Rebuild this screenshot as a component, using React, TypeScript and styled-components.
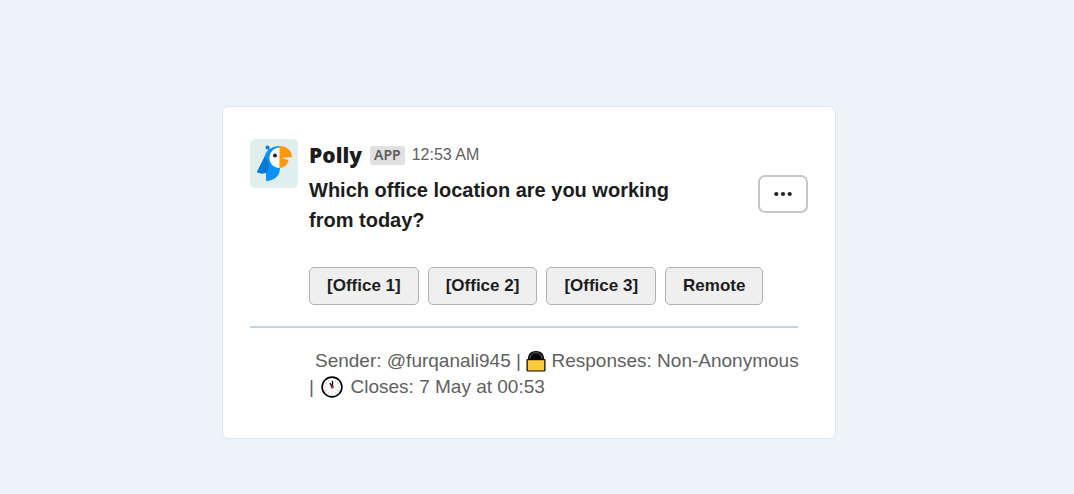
import React from 'react';
import styled, { createGlobalStyle } from 'styled-components';

const GlobalStyle = createGlobalStyle`
  * { box-sizing: border-box; }
  body {
    margin: 0;
    background: #edf3f7;
    color: #1d1c1d;
    font-family: "Liberation Sans", Arial, sans-serif;
  }
`;

const Page = styled.main`
  min-height: 100vh;
  padding: 106px 16px 55px 0;
`;

const Card = styled.article`
  width: 100%;
  max-width: 614px;
  margin: 0 auto;
  padding: 32px 27px 38px;
  background: #fff;
  border: 1px solid #dde5e8;
  border-radius: 7px;
`;

const Message = styled.div`
  display: grid;
  grid-template-columns: 48px 1fr;
  column-gap: 11px;
`;

const Avatar = styled.svg`
  display: block;
  width: 48px;
  height: 49px;
`;

const Header = styled.header`
  display: flex;
  align-items: center;
  height: 32px;
`;

const Name = styled.span`
  font-family: "Open Sans", sans-serif;
  font-size: 21px;
  font-weight: 800;
  line-height: 32px;
`;

const Badge = styled.span`
  margin: 0 7px 0 8px;
  padding: 0 4px 2px;
  border-radius: 3px;
  background: #e0e0e0;
  color: #5c5a5c;
  font-family: "Noto Sans", sans-serif;
  font-size: 14px;
  font-weight: 600;
  line-height: 17px;
`;

const Time = styled.time`
  color: #616061;
  font-size: 16px;
`;

const QuestionRow = styled.div`
  display: flex;
  justify-content: space-between;
  align-items: flex-start;
  padding-top: 4px;
`;

const Question = styled.h1`
  max-width: 400px;
  margin: 0;
  font-size: 20px;
  line-height: 30px;
`;

const MenuButton = styled.button`
  display: grid;
  place-items: center;
  width: 50px;
  height: 38px;
  padding: 0;
  border: 2px solid #c6c6c6;
  border-radius: 7px;
  background: #fff;
`;

const Options = styled.div`
  display: flex;
  flex-wrap: wrap;
  gap: 9px;
  margin-top: 32px;
`;

const Option = styled.button`
  height: 38px;
  padding: 0 17px 1px;
  border: 1px solid #b0b0b0;
  border-radius: 5px;
  background: #efefef;
  color: #1d1c1d;
  font: 700 17px "Liberation Sans", Arial, sans-serif;
`;

const Divider = styled.hr`
  height: 2px;
  margin: 21px 10px 20px 0;
  border: 0;
  background: #bfd8e3;
`;

const Footer = styled.footer`
  margin: 0 0 0 59px;
  color: #616061;
  font-size: 19px;
  line-height: 26px;
  text-indent: 6px;
`;

const Icon = styled.svg<{ $width: number; $gap: number }>`
  width: ${(p) => p.$width}px;
  height: 22px;
  margin: 0 ${(p) => p.$gap}px;
  vertical-align: -5px;
`;

const NoBreak = styled.span`
  white-space: nowrap;
`;

const options = ['[Office 1]', '[Office 2]', '[Office 3]', 'Remote'];
const ticks = Array.from({ length: 12 }, (_, i) => i * 30);

function Parrot() {
  return (
    <Avatar viewBox="0 0 48 49" role="img" aria-label="Polly">
      <rect width="48" height="49" rx="5" fill="#e0eeed" />
      <path d="M18 8.500Q19.500 10 19.500 14" fill="none" stroke="#087ce0" strokeWidth="1.600" />
      <circle cx="17.500" cy="8.500" r="2" fill="#087ce0" />
      <path d="M30 7C22 7 16 11 14.500 18L7 33C10 35 13 34.500 16 34V42C24 42 30 37 30 29Z" fill="#0a91fa" />
      <path d="M15 17L7 33C10 35 13 34.500 16 34C18.500 31 19 28 18.500 24Z" fill="#0b78d2" />
      <path d="M30 8.500C23 9 19.500 13.500 19.500 19C19.500 25 24 29 30 29Z" fill="#fff" />
      <circle cx="25" cy="16.500" r="2" fill="#201c38" />
      <path d="M29.500 7C37 7 41.500 11 42 18L31 19L38.500 21C37.500 26 34 29 29.500 29Z" fill="#ff980b" />
    </Avatar>
  );
}

function Lock() {
  return (
    <Icon $width={20} $gap={0} viewBox="0 0 20 22" aria-hidden="true">
      <path d="M2 11V8.500C2 4 5 1 10 1S18 4 18 8.500V11Z" fill="#000" />
      <path d="M4 9.500V8.500C4 5 6.500 2.800 10 2.800S16 5 16 8.500V9.500" fill="none" stroke="#8d8d8d" strokeWidth="0.800" />
      <rect x="0.500" y="9" width="19" height="12.500" rx="1" fill="#000" />
      <rect x="1.700" y="10.200" width="16.600" height="10.300" fill="#ffc83d" />
    </Icon>
  );
}

function Clock() {
  return (
    <Icon $width={22} $gap={2} viewBox="0 0 22 22" aria-hidden="true">
      <circle cx="11" cy="11" r="9.900" fill="#fff" stroke="#000" strokeWidth="1.600" />
      {ticks.map((angle) => (
        <path key={angle} d="M11 3.500V4.500" stroke="#aaa" transform={`rotate(${angle} 11 11)`} />
      ))}
      <path d="M11.500 11V5M11 11L9 7" stroke="#000" strokeWidth="1.300" />
      <circle cx="11.300" cy="11" r="1.500" fill="#e81123" />
    </Icon>
  );
}

export default function App() {
  return (
    <>
      <GlobalStyle />
      <Page>
        <Card>
          <Message>
            <Parrot />
            <div>
              <Header>
                <Name>Polly</Name>
                <Badge>APP</Badge>
                <Time>12:53 AM</Time>
              </Header>
              <QuestionRow>
                <Question>Which office location are you working from today?</Question>
                <MenuButton type="button" aria-label="More actions">
                  <svg width="18" height="6" viewBox="0 0 18 6" fill="#222" aria-hidden="true">
                    <circle cx="2.300" cy="3" r="2.100" />
                    <circle cx="9" cy="3" r="2.100" />
                    <circle cx="15.700" cy="3" r="2.100" />
                  </svg>
                </MenuButton>
              </QuestionRow>
              <Options>
                {options.map((label) => (
                  <Option key={label} type="button">{label}</Option>
                ))}
              </Options>
            </div>
          </Message>
          <Divider />
          <Footer>
            Sender: @furqanali945 | <Lock /> Responses: <NoBreak>Non-Anonymous</NoBreak>{' '}
            <NoBreak>| <Clock /> Closes:</NoBreak> 7 May at 00:53
          </Footer>
        </Card>
      </Page>
    </>
  );
}
